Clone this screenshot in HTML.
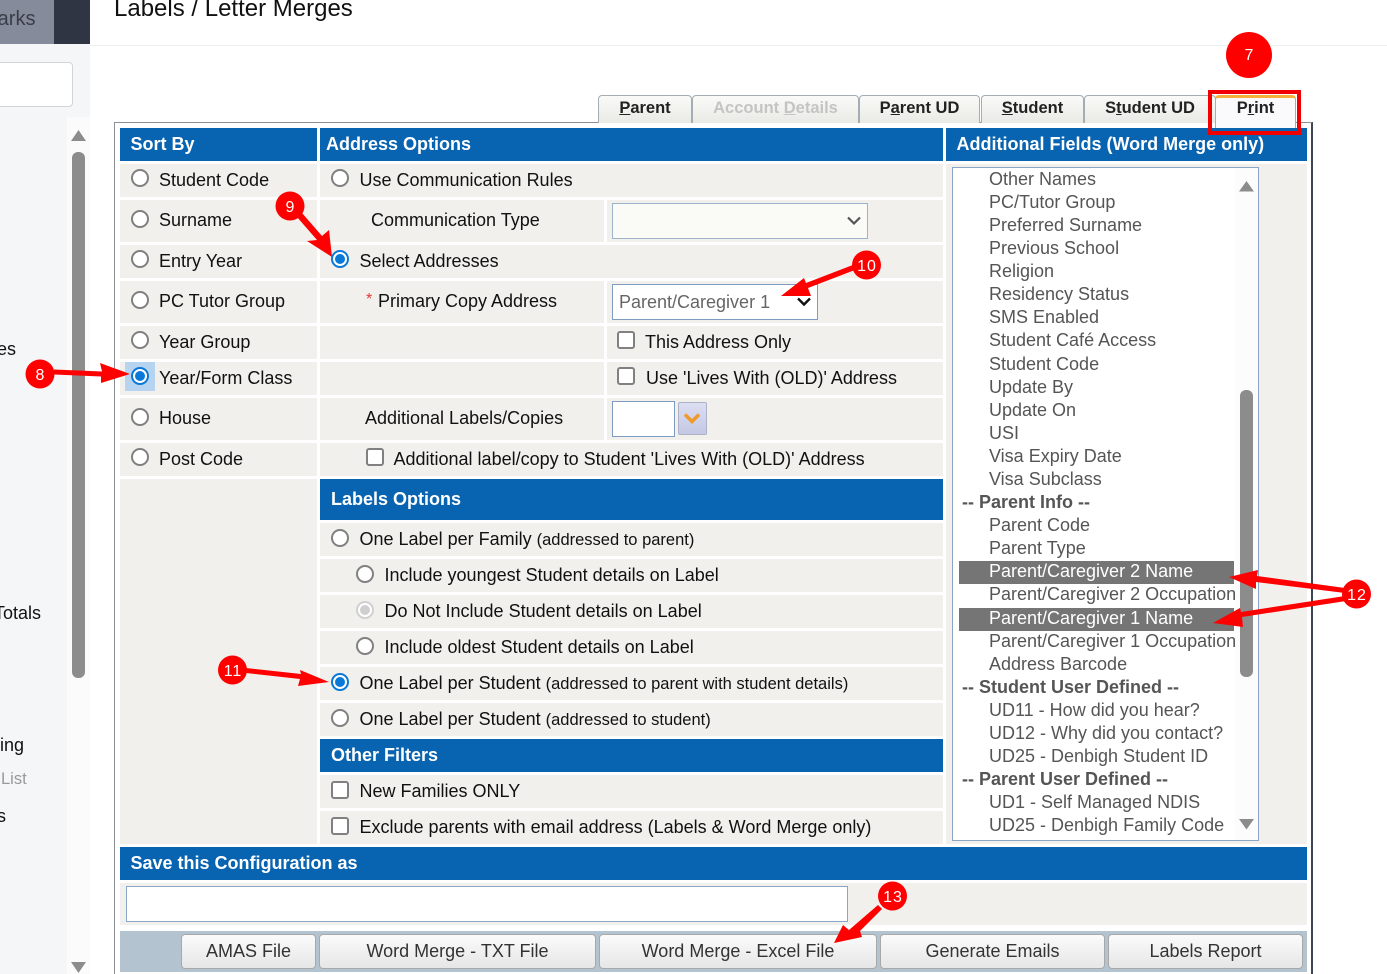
<!DOCTYPE html>
<html><head><meta charset="utf-8"><title>Labels / Letter Merges</title>
<style>
html,body{margin:0;padding:0;background:#fff;overflow:hidden}
body{width:1387px;height:974px;position:relative;font-family:"Liberation Sans",Arial,sans-serif;color:#111}
div,span.a{position:absolute;box-sizing:border-box}
.r{background:#f1f0ec}
.h{background:#0863b0}
.t{white-space:nowrap;font-size:18px;line-height:22px;height:22px}
.b{font-weight:bold;color:#fff}
.s{font-size:16.500px}
.ra{width:18px;height:18px;border:2px solid #808080;border-radius:50%;background:#fff}
.on{border-color:#0a78d7}
.on::after{content:"";position:absolute;left:2px;top:2px;width:10px;height:10px;border-radius:50%;background:#0a78d7}
.dis{border-color:#d0d0d0}
.dis::after{content:"";position:absolute;left:2px;top:2px;width:10px;height:10px;border-radius:50%;background:#cfcfcf}
.c{width:18px;height:18px;border:2px solid #808080;border-radius:3px;background:#fff}
.l{left:989px;color:#555}
.g{left:962px;color:#555;font-weight:bold}
.tab{top:95px;height:28px;border:1px solid #a3adb3;border-bottom:none;border-radius:4px 4px 0 0;background:linear-gradient(#fafaf8,#e9e9e5);font-size:16.500px;font-weight:bold;line-height:24px;text-align:center;color:#222;white-space:nowrap}
.btn{top:934px;height:35px;border:1px solid #a8a8a8;border-radius:4px;background:linear-gradient(#fbfbfb,#e6e6e6);font-size:18px;line-height:33px;text-align:center;color:#333;white-space:nowrap}
u{text-decoration:underline}
</style></head><body>

<!-- top bar -->
<div style="left:0;top:0;width:54px;height:44px;background:#868b9b"></div>
<div style="left:54px;top:0;width:36px;height:44px;background:#2f3542"></div>
<div class="t" style="left:-19px;top:8px;font-size:20px;color:#3a3d48">Marks</div>
<div style="left:90px;top:45px;width:1297px;height:1px;background:#eee"></div>
<div class="t" style="left:114px;top:-4px;font-size:24px;height:26px;line-height:26px;color:#111">Labels / Letter Merges</div>

<!-- sidebar -->
<div style="left:0;top:44px;width:90px;height:930px;background:#f4f6f8"></div>
<div style="left:-6px;top:62px;width:79px;height:45px;background:#fff;border:1px solid #d4d4d4;border-radius:4px"></div>
<div style="left:67px;top:117px;width:23px;height:857px;background:#fbfbfb"></div>
<div style="left:72px;top:152px;width:13px;height:526px;background:#8c8c8c;border-radius:6px"></div>
<svg style="position:absolute;left:0;top:0" width="90" height="974"><path d="M78.500 130L86 141H71Z" fill="#8c8c8c"/><path d="M71 962H86L78.500 973Z" fill="#8c8c8c"/></svg>
<div class="t" style="left:-24px;top:338px">Fees</div>
<div class="t" style="left:-6px;top:602px;white-space:pre">Totals</div>
<div class="t" style="left:-33px;top:734px">Mailing</div>
<div class="t" style="left:1px;top:768px;font-size:16.500px;color:#999">List</div>
<div class="t" style="left:-34px;top:805px">Fees</div>

<!-- panel -->
<div style="left:114px;top:122px;width:1199px;height:860px;border:1px solid #8b8f93;border-right:2px solid #3a4656;background:#fff"></div>

<!-- tabs -->
<div class="tab" style="left:598px;width:94px"><u>P</u>arent</div>
<div class="tab" style="left:692px;width:167px;color:#c4c4c4">Account <u>D</u>etails</div>
<div class="tab" style="left:859px;width:121px">P<u>a</u>rent UD</div>
<div class="tab" style="left:981px;width:103px"><u>S</u>tudent</div>
<div class="tab" style="left:1084px;width:132px">S<u>t</u>udent UD</div>

<!-- headers -->
<div class="h" style="left:120px;top:128px;width:197px;height:33px"></div>
<div class="h" style="left:320px;top:128px;width:623px;height:33px"></div>
<div class="h" style="left:946px;top:128px;width:361px;height:33px"></div>
<div class="tab" style="left:1215px;width:81px;height:33px;background:#fafafc;border-top:3px solid #f4b03a;line-height:20px;z-index:2">P<u>r</u>int</div>
<div class="t b" style="left:130.500px;top:133px">Sort By</div>
<div class="t b" style="left:326px;top:133px">Address Options</div>
<div class="t b" style="left:956.500px;top:133px">Additional Fields (Word Merge only)</div>

<!-- col1 rows -->
<div class="r" style="left:120px;top:164px;width:197px;height:33px"></div>
<div class="r" style="left:120px;top:200px;width:197px;height:42px"></div>
<div class="r" style="left:120px;top:245px;width:197px;height:33px"></div>
<div class="r" style="left:120px;top:281px;width:197px;height:42px"></div>
<div class="r" style="left:120px;top:326px;width:197px;height:33px"></div>
<div class="r" style="left:120px;top:362px;width:197px;height:33px"></div>
<div class="r" style="left:120px;top:398px;width:197px;height:42px"></div>
<div class="r" style="left:120px;top:443px;width:197px;height:33px"></div>
<div class="r" style="left:120px;top:479px;width:197px;height:365px"></div>
<div style="left:125px;top:362px;width:30px;height:29px;background:#b6d4f0"></div>

<div class="ra" style="left:131px;top:169px"></div><div class="t" style="left:159px;top:169px">Student Code</div>
<div class="ra" style="left:131px;top:210px"></div><div class="t" style="left:159px;top:209px">Surname</div>
<div class="ra" style="left:131px;top:250px"></div><div class="t" style="left:159px;top:250px">Entry Year</div>
<div class="ra" style="left:131px;top:291px"></div><div class="t" style="left:159px;top:290px">PC Tutor Group</div>
<div class="ra" style="left:131px;top:331px"></div><div class="t" style="left:159px;top:331px">Year Group</div>
<div class="ra on" style="left:131px;top:367px"></div><div class="t" style="left:159px;top:367px">Year/Form Class</div>
<div class="ra" style="left:131px;top:408px"></div><div class="t" style="left:159px;top:407px">House</div>
<div class="ra" style="left:131px;top:448px"></div><div class="t" style="left:159px;top:448px">Post Code</div>

<!-- col2 rows -->
<div class="r" style="left:320px;top:164px;width:623px;height:33px"></div>
<div class="r" style="left:320px;top:200px;width:284px;height:42px"></div>
<div class="r" style="left:607px;top:200px;width:336px;height:42px"></div>
<div class="r" style="left:320px;top:245px;width:623px;height:33px"></div>
<div class="r" style="left:320px;top:281px;width:284px;height:42px"></div>
<div class="r" style="left:607px;top:281px;width:336px;height:42px"></div>
<div class="r" style="left:320px;top:326px;width:284px;height:33px"></div>
<div class="r" style="left:607px;top:326px;width:336px;height:33px"></div>
<div class="r" style="left:320px;top:362px;width:284px;height:33px"></div>
<div class="r" style="left:607px;top:362px;width:336px;height:33px"></div>
<div class="r" style="left:320px;top:398px;width:284px;height:42px"></div>
<div class="r" style="left:607px;top:398px;width:336px;height:42px"></div>
<div class="r" style="left:320px;top:443px;width:623px;height:33px"></div>
<div class="h" style="left:320px;top:479px;width:623px;height:41px"></div>
<div class="r" style="left:320px;top:523px;width:623px;height:33px"></div>
<div class="r" style="left:320px;top:559px;width:623px;height:33px"></div>
<div class="r" style="left:320px;top:595px;width:623px;height:33px"></div>
<div class="r" style="left:320px;top:631px;width:623px;height:33px"></div>
<div class="r" style="left:320px;top:667px;width:623px;height:33px"></div>
<div class="r" style="left:320px;top:703px;width:623px;height:33px"></div>
<div class="h" style="left:320px;top:739px;width:623px;height:33px"></div>
<div class="r" style="left:320px;top:775px;width:623px;height:33px"></div>
<div class="r" style="left:320px;top:811px;width:623px;height:33px"></div>

<div class="ra" style="left:331px;top:169px"></div><div class="t" style="left:359.500px;top:169px">Use Communication Rules</div>
<div class="t" style="left:371px;top:209px">Communication Type</div>
<div style="left:612px;top:203px;width:256px;height:36px;background:#fafaf6;border:1px solid #9db3cc"></div>
<svg style="position:absolute;left:846px;top:215px" width="16" height="12"><path d="M2 2.500L8 8.500L14 2.500" fill="none" stroke="#555" stroke-width="2.200"/></svg>
<div class="ra on" style="left:331px;top:250px"></div><div class="t" style="left:359.500px;top:250px">Select Addresses</div>
<div class="t" style="left:366px;top:289px;font-size:16px;color:#e33">*</div>
<div class="t" style="left:378px;top:290px">Primary Copy Address</div>
<div style="left:612px;top:284px;width:206px;height:36px;background:#fff;border:1px solid #7d9cc0"></div>
<div class="t" style="left:619px;top:291px;color:#666">Parent/Caregiver 1</div>
<svg style="position:absolute;left:796px;top:296px" width="16" height="12"><path d="M2 2.500L8 8.500L14 2.500" fill="none" stroke="#111" stroke-width="2.400"/></svg>
<div class="c" style="left:617px;top:331px"></div><div class="t" style="left:645px;top:331px">This Address Only</div>
<div class="c" style="left:617px;top:367px"></div><div class="t" style="left:646px;top:367px">Use 'Lives With (OLD)' Address</div>
<div class="t" style="left:365px;top:407px">Additional Labels/Copies</div>
<div style="left:612px;top:401px;width:63px;height:36px;background:#fff;border:1px solid #7d9cc0"></div>
<div style="left:678px;top:402px;width:29px;height:33px;background:linear-gradient(#dcdef2,#c4c8e4);border:1px solid #aeb2c8;border-radius:2px"></div>
<svg style="position:absolute;left:682px;top:412px" width="20" height="14"><path d="M3 2.500L10 9.500L17 2.500" fill="none" stroke="#ef9a2a" stroke-width="3.500"/></svg>
<div class="c" style="left:366px;top:448px"></div><div class="t" style="left:393.500px;top:448px">Additional label/copy to Student 'Lives With (OLD)' Address</div>

<div class="t b" style="left:331px;top:488px">Labels Options</div>
<div class="ra" style="left:331px;top:529px"></div><div class="t" style="left:359.500px;top:528px">One Label per Family <span class="s">(addressed to parent)</span></div>
<div class="ra" style="left:356px;top:565px"></div><div class="t" style="left:384.500px;top:564px">Include youngest Student details on Label</div>
<div class="ra dis" style="left:356px;top:601px"></div><div class="t" style="left:384.500px;top:600px">Do Not Include Student details on Label</div>
<div class="ra" style="left:356px;top:637px"></div><div class="t" style="left:384.500px;top:636px">Include oldest Student details on Label</div>
<div class="ra on" style="left:331px;top:673px"></div><div class="t" style="left:359.500px;top:672px">One Label per Student <span class="s">(addressed to parent with student details)</span></div>
<div class="ra" style="left:331px;top:709px"></div><div class="t" style="left:359.500px;top:708px">One Label per Student <span class="s">(addressed to student)</span></div>
<div class="t b" style="left:331px;top:744px">Other Filters</div>
<div class="c" style="left:331px;top:781px"></div><div class="t" style="left:359.500px;top:780px">New Families ONLY</div>
<div class="c" style="left:331px;top:817px"></div><div class="t" style="left:359.500px;top:816px">Exclude parents with email address (Labels &amp; Word Merge only)</div>

<!-- col3 -->
<div class="r" style="left:946px;top:164px;width:361px;height:680px"></div>
<div style="left:952px;top:167px;width:307px;height:674px;background:#fff;border:1px solid #8aa6c4"></div>
<div style="left:1235px;top:168px;width:23px;height:672px;background:#fcfcfc"></div>
<div style="left:959px;top:561px;width:275px;height:23px;background:#757575"></div>
<div style="left:959px;top:608px;width:275px;height:23px;background:#757575"></div>
<div style="left:1240px;top:390px;width:13px;height:287px;background:#8c8c8c;border-radius:6px"></div>
<svg style="position:absolute;left:1236px;top:178px" width="22" height="654"><path d="M10.500 3L18 13.500H3Z" fill="#8c8c8c"/><path d="M3 641H18L10.500 651.500Z" fill="#8c8c8c"/></svg>

<div class="t l" style="top:168px">Other Names</div>
<div class="t l" style="top:191px">PC/Tutor Group</div>
<div class="t l" style="top:214px">Preferred Surname</div>
<div class="t l" style="top:237px">Previous School</div>
<div class="t l" style="top:260px">Religion</div>
<div class="t l" style="top:283px">Residency Status</div>
<div class="t l" style="top:306px">SMS Enabled</div>
<div class="t l" style="top:329px">Student Café Access</div>
<div class="t l" style="top:353px">Student Code</div>
<div class="t l" style="top:376px">Update By</div>
<div class="t l" style="top:399px">Update On</div>
<div class="t l" style="top:422px">USI</div>
<div class="t l" style="top:445px">Visa Expiry Date</div>
<div class="t l" style="top:468px">Visa Subclass</div>
<div class="t g" style="top:491px">-- Parent Info --</div>
<div class="t l" style="top:514px">Parent Code</div>
<div class="t l" style="top:537px">Parent Type</div>
<div class="t l" style="top:560px;color:#fff">Parent/Caregiver 2 Name</div>
<div class="t l" style="top:583px">Parent/Caregiver 2 Occupation</div>
<div class="t l" style="top:607px;color:#fff">Parent/Caregiver 1 Name</div>
<div class="t l" style="top:630px">Parent/Caregiver 1 Occupation</div>
<div class="t l" style="top:653px">Address Barcode</div>
<div class="t g" style="top:676px">-- Student User Defined --</div>
<div class="t l" style="top:699px">UD11 - How did you hear?</div>
<div class="t l" style="top:722px">UD12 - Why did you contact?</div>
<div class="t l" style="top:745px">UD25 - Denbigh Student ID</div>
<div class="t g" style="top:768px">-- Parent User Defined --</div>
<div class="t l" style="top:791px">UD1 - Self Managed NDIS</div>
<div class="t l" style="top:814px">UD25 - Denbigh Family Code</div>

<!-- save -->
<div class="h" style="left:120px;top:847px;width:1187px;height:33px"></div>
<div class="t b" style="left:130.500px;top:852px">Save this Configuration as</div>
<div class="r" style="left:120px;top:883px;width:1187px;height:42px"></div>
<div style="left:126px;top:886px;width:722px;height:36px;background:#fff;border:1px solid #8aa6c4"></div>

<!-- buttons -->
<div style="left:120px;top:931px;width:1187px;height:41px;background:#b4c3d0"></div>
<div class="btn" style="left:181px;width:135px">AMAS File</div>
<div class="btn" style="left:319px;width:277px">Word Merge - TXT File</div>
<div class="btn" style="left:599px;width:278px">Word Merge - Excel File</div>
<div class="btn" style="left:880px;width:225px">Generate Emails</div>
<div class="btn" style="left:1108px;width:195px">Labels Report</div>

<!-- annotations -->
<svg style="position:absolute;left:0;top:0;z-index:5" width="1387" height="974" font-family="Liberation Sans, Arial, sans-serif" font-size="16" fill="#fff" text-anchor="middle">
<rect x="1210" y="92" width="89" height="41" fill="none" stroke="#f00000" stroke-width="4"/>
<g fill="#f00" stroke="none">
<path d="M54 369.500L102 371.500L100 363L130 374L101 383L101 376.500L54 374.500Z"/>
<path d="M297 217L302 213L322 236L329 230L332 257L307 241L317 240Z"/>
<path d="M858 263L860 268L808 288L811 296L781 296L804 278L806 283Z"/>
<path d="M246 668L246 673L300 679L298 686L329 682L300 670L301 674Z"/>
<path d="M1345 588L1345 593L1256 582L1256 589L1229 577L1258 570L1257 576Z"/>
<path d="M1345 596L1346 601L1242 617L1243 627L1213 623L1240 608L1241 612Z"/>
<path d="M878 905L882 909L860 931L862 937L834 943L843 925L849 930Z"/>
<circle cx="1249" cy="55" r="23"/>
<circle cx="40" cy="374" r="14.500"/>
<circle cx="290" cy="206" r="14.500"/>
<circle cx="866.500" cy="265" r="14.500"/>
<circle cx="232.500" cy="670" r="14.500"/>
<circle cx="1356.500" cy="594" r="14.500"/>
<circle cx="892.500" cy="896" r="14.500"/>
</g>
<text x="1249" y="60">7</text>
<text x="40" y="380">8</text>
<text x="290" y="212">9</text>
<text x="867" y="271" letter-spacing="1">10</text>
<text x="233" y="676" letter-spacing="1">11</text>
<text x="1357" y="600" letter-spacing="1">12</text>
<text x="893" y="902" letter-spacing="1">13</text>
</svg>
</body></html>
